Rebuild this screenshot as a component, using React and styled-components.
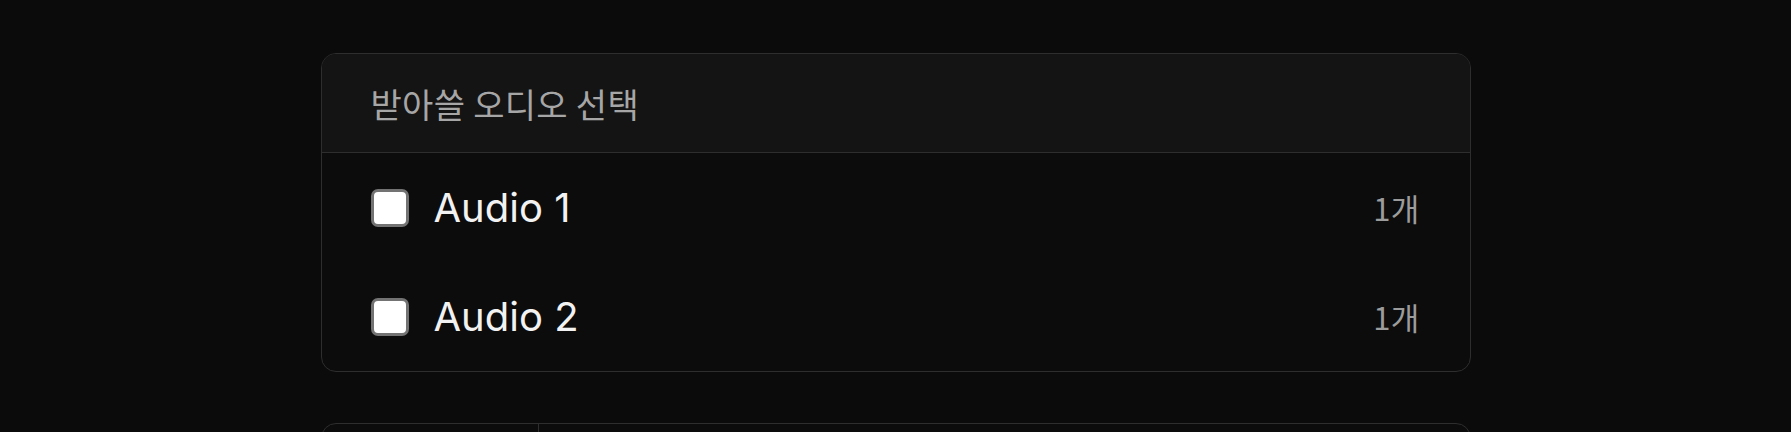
import React from 'react';
import styled, { createGlobalStyle } from 'styled-components';

const audioTracks = [
	{ id: 1, name: 'Audio 1', count: 1 },
	{ id: 2, name: 'Audio 2', count: 1 }
];

const GlobalStyle = createGlobalStyle`
	html, body {
		margin: 0;
		padding: 0;
		background: #0b0b0b;
		font-family: Inter, "Noto Sans", "Noto Sans CJK KR", sans-serif;
	}
`;

const Page = styled.div`
	display: flex;
	flex-direction: column;
	align-items: center;
	gap: 51px;
	padding-top: 53px;
	height: 432px;
	overflow: hidden;
	box-sizing: border-box;
`;

const Card = styled.section`
	width: 1150px;
	box-sizing: border-box;
	border: 1px solid #2e2e2e;
	border-radius: 15px;
	background: #0c0c0c;
	overflow: hidden;
	flex-shrink: 0;
`;

const CardHeader = styled.header`
	height: 98px;
	display: flex;
	align-items: center;
	padding: 0 48px 0 49px;
	background: #141414;
	border-bottom: 1px solid #2e2e2e;
`;

const Title = styled.h2`
	margin: 0;
	font-family: "Noto Sans CJK KR", sans-serif;
	font-size: 34px;
	font-weight: 400;
	letter-spacing: 0.3px;
	color: #a6a6a6;
`;

const TrackRow = styled.label`
	height: 109px;
	display: flex;
	align-items: center;
	padding: 0 50px 0 49px;
	cursor: pointer;
`;

const Checkbox = styled.input.attrs({ type: 'checkbox' })`
	appearance: none;
	margin: 0;
	width: 38px;
	height: 38px;
	box-sizing: border-box;
	background: #ffffff;
	border: 3px solid #737373;
	border-radius: 7px;
	flex-shrink: 0;
`;

const TrackName = styled.span`
	margin-left: 25px;
	flex: 1;
	font-size: 40px;
	font-weight: 400;
	color: #f2f2f2;
`;

const Count = styled.span`
	font-family: "Noto Sans CJK KR", sans-serif;
	font-size: 31px;
	letter-spacing: 0.3px;
	color: #9c9c9c;
`;

const SplitCard = styled(Card)`
	height: 200px;
	display: grid;
	grid-template-columns: 217px 1fr;
`;

const SidePane = styled.div`
	border-right: 1px solid #2e2e2e;
`;

const MainPane = styled.div``;

export default function App() {
	return (
		<>
			<GlobalStyle />
			<Page>
				<Card>
					<CardHeader>
						<Title>받아쓸 오디오 선택</Title>
					</CardHeader>
					{audioTracks.map(track => (
						<TrackRow key={track.id}>
							<Checkbox />
							<TrackName>{track.name}</TrackName>
							<Count>{track.count}개</Count>
						</TrackRow>
					))}
				</Card>
				<SplitCard>
					<SidePane />
					<MainPane />
				</SplitCard>
			</Page>
		</>
	);
}
